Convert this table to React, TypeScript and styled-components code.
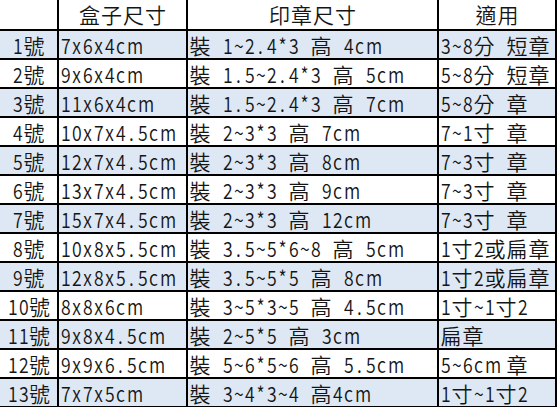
import React from "react";
import styled, { createGlobalStyle } from "styled-components";

const Global = createGlobalStyle`
  html, body { margin: 0; padding: 0; background: #ffffff; }
  body { overflow: hidden; }
`;

const Table = styled.div`
  display: grid;
  grid-template-columns: 57px 127px 249px 116px;
  grid-auto-rows: 27px;
  grid-template-rows: 29px;
  column-gap: 2px;
  row-gap: 2px;
  background: #000;
  width: 555px;
  padding: 0 2px 2px 0;
  font-family: "Noto Sans CJK TC", "Noto Sans", sans-serif;
  font-size: 21px;
  font-weight: 350;
  color: #151515;
`;

const Cell = styled.div<{ $shade?: boolean; $align?: "left" | "center" }>`
  background: ${(p) => (p.$shade ? "#dde8f4" : "#ffffff")};
  text-align: ${(p) => (p.$align === "center" ? "center" : "left")};
  padding: 1px 0 0 ${(p) => (p.$align === "center" ? "0" : "1px")};
  white-space: pre;
  line-height: 26px;
  min-width: 0;
`;

const Glyph = styled.span<{ $wide: boolean }>`
  display: inline-block;
  width: ${(p) => (p.$wide ? "22px" : "11px")};
  text-align: center;
  white-space: pre;
  transform: ${(p) => (p.$wide ? "none" : "scaleX(0.84)")};
`;

function Mono({ text }: { text: string }) {
  return (
    <>
      {Array.from(text).map((ch, i) => (
        <Glyph key={i} $wide={ch.charCodeAt(0) > 0x2e80}>
          {ch === " " ? "\u00a0" : ch}
        </Glyph>
      ))}
    </>
  );
}

const rows: [string, string, string, string][] = [
  ["1號", "7x6x4cm", "裝 1~2.4*3 高 4cm", "3~8分 短章"],
  ["2號", "9x6x4cm", "裝 1.5~2.4*3 高 5cm", "5~8分 短章"],
  ["3號", "11x6x4cm", "裝 1.5~2.4*3 高 7cm", "5~8分 章"],
  ["4號", "10x7x4.5cm", "裝 2~3*3 高 7cm", "7~1寸 章"],
  ["5號", "12x7x4.5cm", "裝 2~3*3 高 8cm", "7~3寸 章"],
  ["6號", "13x7x4.5cm", "裝 2~3*3 高 9cm", "7~3寸 章"],
  ["7號", "15x7x4.5cm", "裝 2~3*3 高 12cm", "7~3寸 章"],
  ["8號", "10x8x5.5cm", "裝 3.5~5*6~8 高 5cm", "1寸2或扁章"],
  ["9號", "12x8x5.5cm", "裝 3.5~5*5 高 8cm", "1寸2或扁章"],
  ["10號", "8x8x6cm", "裝 3~5*3~5 高 4.5cm", "1寸~1寸2"],
  ["11號", "9x8x4.5cm", "裝 2~5*5 高 3cm", "扁章"],
  ["12號", "9x9x6.5cm", "裝 5~6*5~6 高 5.5cm", "5~6cm 章"],
  ["13號", "7x7x5cm", "裝 3~4*3~4 高4cm", "1寸~1寸2"],
];

export default function App() {
  return (
    <>
      <Global />
      <Table>
        <Cell $align="center" />
        <Cell $align="center"><Mono text="盒子尺寸" /></Cell>
        <Cell $align="center"><Mono text="印章尺寸" /></Cell>
        <Cell $align="center"><Mono text="適用" /></Cell>
        {rows.map((r, i) => {
          const shade = i % 2 === 0;
          return (
            <React.Fragment key={r[0]}>
              <Cell $shade={shade} $align="center"><Mono text={r[0]} /></Cell>
              <Cell $shade={shade}><Mono text={r[1]} /></Cell>
              <Cell $shade={shade}><Mono text={r[2]} /></Cell>
              <Cell $shade={shade}><Mono text={r[3]} /></Cell>
            </React.Fragment>
          );
        })}
      </Table>
    </>
  );
}
